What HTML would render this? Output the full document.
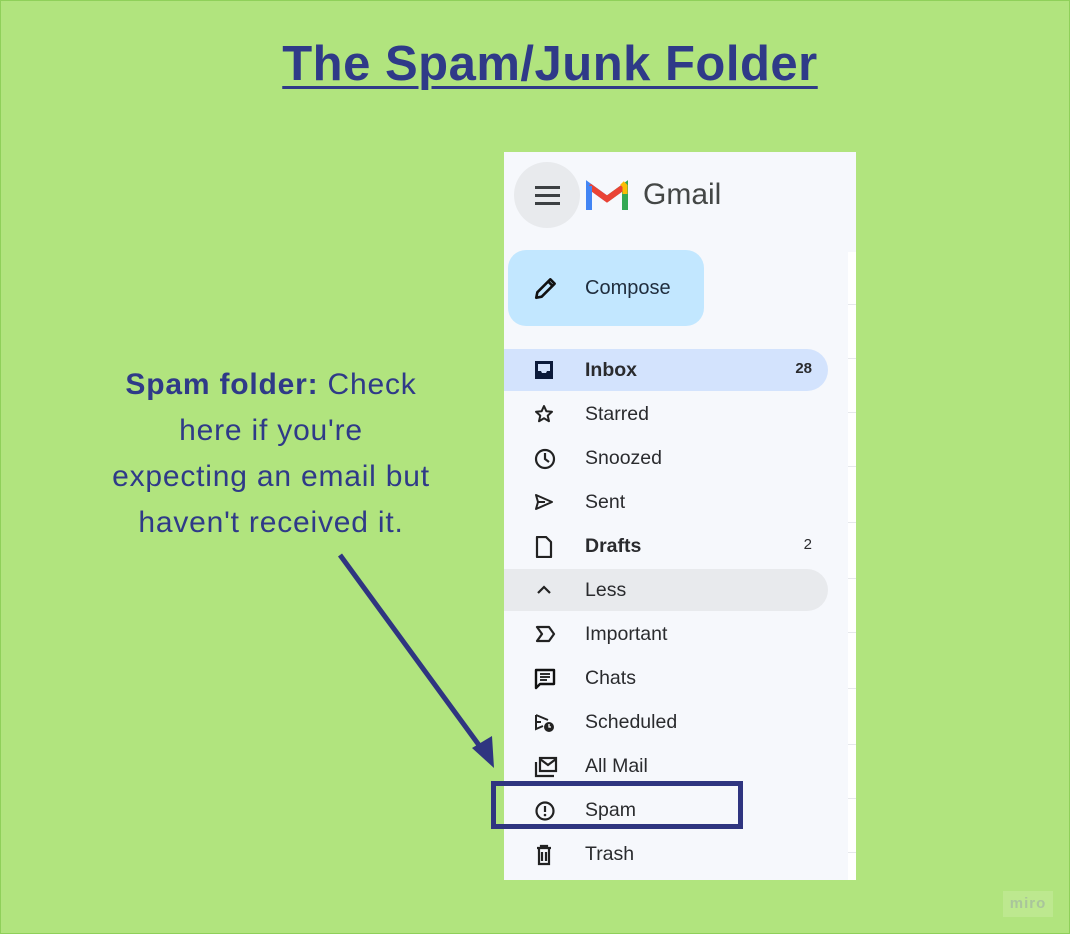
<!DOCTYPE html>
<html><head><meta charset="utf-8"><style>
*{margin:0;padding:0;box-sizing:border-box}
body{width:1070px;height:934px;background:#b1e47e;position:relative;overflow:hidden;font-family:"Liberation Sans",sans-serif}
.frame{position:absolute;left:0;top:0;width:1070px;height:934px;border:1px solid #8fd05a}
.title{position:absolute;left:0;width:1100px;top:36px;text-align:center;font-size:49px;font-weight:bold;color:#2f3a88;text-decoration:underline;text-decoration-thickness:3px;text-underline-offset:6px;letter-spacing:0.5px}
.note{position:absolute;left:61px;width:420px;top:362px;text-align:center;font-size:30px;line-height:46px;color:#2f3a88;letter-spacing:0.8px}
.panel{position:absolute;left:504px;top:152px;width:352px;height:728px;background:#f6f8fc;overflow:hidden}
.strip{position:absolute;left:344px;top:100px;width:8px;height:628px;background:#fff}
.strip i{position:absolute;left:0;width:8px;height:1px;background:#e6e8ec}
.menu{position:absolute;left:10px;top:10px;width:66px;height:66px;border-radius:50%;background:#e8eaed}
.menu b{position:absolute;left:21px;width:25px;height:2.5px;background:#3c4043}
.gm{position:absolute;left:139px;top:26px;font-size:30px;color:#444746}
.compose{position:absolute;left:4px;top:98px;width:196px;height:76px;border-radius:18px;background:#c2e7ff}
.compose span{position:absolute;left:77px;top:27px;font-size:20px;color:#1f2d3d}
.row{position:absolute;left:0;width:324px;height:42px;font-size:19.5px;color:#2a2b2e}
.row .t{position:absolute;left:81px;top:10px}
.row .n{position:absolute;right:16px;top:11px;font-size:15px}
.row svg{position:absolute;left:30px;top:11px}
.sel{background:#d3e3fd;border-radius:0 21px 21px 0}
.less{background:#e8eaed;border-radius:0 21px 21px 0}
.box{position:absolute;left:491px;top:781px;width:252px;height:48px;border:5px solid #2f3580}
.miro{position:absolute;left:1003px;top:891px;width:50px;height:26px;background:#bde88f;color:#a9c59b;font-size:15px;font-weight:bold;text-align:center;line-height:26px;letter-spacing:1px}
</style></head><body>
<div class="frame"></div>
<div class="title">The Spam/Junk Folder</div>
<div class="note"><b>Spam folder:</b> Check<br>here if you're<br>expecting an email but<br>haven't received it.</div>
<svg style="position:absolute;left:0;top:0" width="1070" height="934"><line x1="340" y1="555" x2="484" y2="752" stroke="#2f3580" stroke-width="5"/><polygon points="494,768 472,748 492,736" fill="#2f3580"/></svg>
<div class="panel">
<div class="strip"><i style="top:52px"></i><i style="top:106px"></i><i style="top:160px"></i><i style="top:214px"></i><i style="top:270px"></i><i style="top:326px"></i><i style="top:380px"></i><i style="top:436px"></i><i style="top:492px"></i><i style="top:546px"></i><i style="top:600px"></i></div>
<div class="menu"><b style="top:24px"></b><b style="top:32px"></b><b style="top:40px"></b></div>
<svg style="position:absolute;left:82px;top:28px" width="42" height="32" viewBox="0 0 42 32"><path d="M3 30V6l18 13" fill="none" stroke="#4285f4" stroke-width="6"/><path d="M39 30V6L21 19" fill="none" stroke="#34a853" stroke-width="6"/><path d="M3 6l18 13L39 6" fill="none" stroke="#ea4335" stroke-width="6"/><path d="M36 3l3 3v8" fill="none" stroke="#fbbc04" stroke-width="5"/><path d="M3 30V6" stroke="#4285f4" stroke-width="6"/><path d="M39 30V14" stroke="#34a853" stroke-width="6"/></svg>
<div class="gm">Gmail</div>
<div class="compose"><svg style="position:absolute;left:25px;top:25px" width="26" height="26" viewBox="0 0 24 24"><path d="M3 21l1-5L16 4l4 4L8 20z M14 6l4 4" fill="none" stroke="#111" stroke-width="2.4" stroke-linejoin="round"/></svg><span>Compose</span></div>
<div class="row sel" style="top:197px;font-weight:bold"><svg width="20" height="20" viewBox="0 0 20 20"><rect x="1" y="1" width="18" height="18" fill="#0b1a3a"/><path d="M4 4h12v7h-3l-1 2H8l-1-2H4z" fill="#d3e3fd"/></svg><span class="t">Inbox</span><span class="n">28</span></div>
<div class="row" style="top:241px"><svg width="20" height="20" viewBox="0 0 20 20"><path d="M10 2l2.4 5.3 5.6.5-4.3 3.8 1.3 5.6L10 14.3 5 17.2l1.3-5.6L2 7.8l5.6-.5z" fill="none" stroke="#222" stroke-width="2" stroke-linejoin="round"/></svg><span class="t">Starred</span></div>
<div class="row" style="top:285px"><svg width="22" height="22" viewBox="0 0 22 22"><circle cx="11" cy="11" r="9" fill="none" stroke="#222" stroke-width="2.2"/><path d="M11 5v6l4 3" fill="none" stroke="#222" stroke-width="2.2"/></svg><span class="t">Snoozed</span></div>
<div class="row" style="top:329px"><svg width="20" height="20" viewBox="0 0 20 20"><path d="M2 3l16 7-16 7 2-7z M4 10h7" fill="none" stroke="#222" stroke-width="2" stroke-linejoin="round"/></svg><span class="t">Sent</span></div>
<div class="row" style="top:373px;font-weight:bold"><svg width="20" height="22" viewBox="0 0 20 22"><path d="M3 1h9l5 5v15H3z" fill="none" stroke="#222" stroke-width="2.2" stroke-linejoin="round"/></svg><span class="t">Drafts</span><span class="n" style="font-weight:normal">2</span></div>
<div class="row less" style="top:417px"><svg width="20" height="20" viewBox="0 0 20 20"><path d="M4 13l6-6 6 6" fill="none" stroke="#222" stroke-width="2.2"/></svg><span class="t">Less</span></div>
<div class="row" style="top:461px"><svg width="22" height="20" viewBox="0 0 22 20"><path d="M3 3h12l5 7-5 7H3l5-7z" fill="none" stroke="#222" stroke-width="2.2" stroke-linejoin="round"/></svg><span class="t">Important</span></div>
<div class="row" style="top:505px"><svg width="22" height="22" viewBox="0 0 22 22"><path d="M2 2h18v14H6l-4 4z" fill="none" stroke="#111" stroke-width="2.4" stroke-linejoin="round"/><path d="M6 6h10M6 9h10M6 12h7" stroke="#111" stroke-width="1.8"/></svg><span class="t">Chats</span></div>
<div class="row" style="top:549px"><svg width="22" height="22" viewBox="0 0 22 22"><path d="M2 3l12 5M2 3v14l7-3M2 10h5" fill="none" stroke="#222" stroke-width="2"/><circle cx="15" cy="15" r="5" fill="#222"/><path d="M15 12v3h2" stroke="#fff" stroke-width="1.3" fill="none"/></svg><span class="t">Scheduled</span></div>
<div class="row" style="top:593px"><svg width="24" height="22" viewBox="0 0 24 22"><path d="M2 6v14h18" fill="none" stroke="#222" stroke-width="2.2"/><rect x="6" y="2" width="16" height="13" fill="none" stroke="#222" stroke-width="2.2"/><path d="M6 3l8 6 8-6" fill="none" stroke="#222" stroke-width="2.2"/></svg><span class="t">All Mail</span></div>
<div class="row" style="top:637px"><svg width="22" height="22" viewBox="0 0 22 22"><circle cx="11" cy="11" r="8.5" fill="none" stroke="#222" stroke-width="2.2"/><path d="M11 6v6" stroke="#222" stroke-width="2.2"/><circle cx="11" cy="15" r="1.3" fill="#222"/></svg><span class="t">Spam</span></div>
<div class="row" style="top:681px"><svg width="20" height="22" viewBox="0 0 20 22"><path d="M3 4h14M7 4V2h6v2M5 5v15h10V5M8 8v9M12 8v9" fill="none" stroke="#222" stroke-width="2.2"/></svg><span class="t">Trash</span></div>
</div>
<div class="box"></div>
<div class="miro">miro</div>
</body></html>
